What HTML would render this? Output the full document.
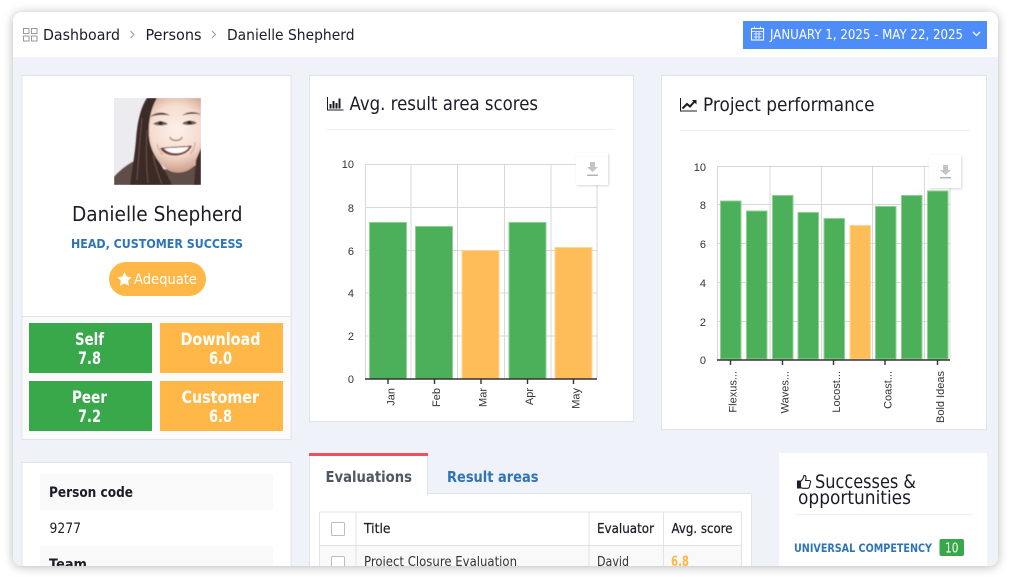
<!DOCTYPE html>
<html lang="en"><head><meta charset="utf-8"><title>Danielle Shepherd</title>
<style>
html,body{margin:0;padding:0;background:#fff;width:1010px;height:577px;overflow:hidden}
svg{display:block}
text{font-family:"DejaVu Sans","Liberation Sans",sans-serif;fill:#1c1c28}
.ax{font-family:"Liberation Sans",sans-serif;font-size:11px;fill:#333}
.b{font-weight:bold}
.w{fill:#fff}
.tile{font-weight:bold;font-size:17px;fill:#fff}
.th{font-size:13.500px;stroke:#222;stroke-width:.25}
.g{stroke:#d8d8d8;stroke-width:1;fill:none}
</style></head><body>
<svg width="1010" height="577" viewBox="0 0 1010 577" xmlns="http://www.w3.org/2000/svg">
<defs>
<clipPath id="win"><rect x="13" y="12" width="985" height="554" rx="9"/></clipPath>
<clipPath id="ph"><rect x="114" y="98" width="87" height="87"/></clipPath>
<radialGradient id="skin" gradientUnits="userSpaceOnUse" cx="176" cy="130" r="42">
<stop offset="0" stop-color="#fdf1ea"/><stop offset=".6" stop-color="#f5dccf"/><stop offset="1" stop-color="#cf9f8b"/>
</radialGradient>
<filter id="bl" x="-10%" y="-10%" width="120%" height="120%"><feGaussianBlur stdDeviation="0.6"/></filter>
<filter id="sh" x="-30%" y="-30%" width="160%" height="160%"><feDropShadow dx="1" dy="1" stdDeviation="1.200" flood-color="#000" flood-opacity=".16"/></filter>
</defs>
<rect x="13" y="12" width="985" height="554" rx="9" fill="#fff" style="filter:drop-shadow(0 1px 5px rgba(0,0,0,.28))"/>
<g clip-path="url(#win)">
<rect x="13" y="12" width="985" height="554" fill="#eff2f9"/>
<rect x="13" y="12" width="985" height="45" fill="#fff"/>

<!-- breadcrumb -->
<g fill="none" stroke="#9a9a9a" stroke-width="1">
<rect x="23.500" y="28.500" width="5.500" height="5"/><rect x="31.500" y="28.500" width="5.500" height="5"/>
<rect x="23.500" y="36" width="5.500" height="5"/><rect x="31.500" y="36" width="5.500" height="5"/>
<path d="M130.500 31l3.500 3.500-3.500 3.500M212 31l3.500 3.500-3.500 3.500"/>
</g>
<text x="43" y="40" font-size="15.500" textLength="77" lengthAdjust="spacingAndGlyphs">Dashboard</text>
<text x="145.500" y="40" font-size="15.500" textLength="56" lengthAdjust="spacingAndGlyphs">Persons</text>
<text x="227" y="40" font-size="15.500" textLength="127.500" lengthAdjust="spacingAndGlyphs">Danielle Shepherd</text>

<!-- date -->
<rect x="743" y="21" width="244" height="28" fill="#4d8cf9"/>
<g fill="none" stroke="#fff" stroke-width="1.100">
<rect x="751.500" y="28.500" width="12" height="11.500"/>
<path d="M751.500 31.500h12M754.500 26.500v2.500M760.500 26.500v2.500M753.500 34h8M753.500 37h8M756 32v7M759 32v7" stroke-width=".8"/>
<path d="M973 32l3.500 3.500 3.500-3.500" stroke-width="1.300"/>
</g>
<text class="w" x="770" y="39" font-size="13" textLength="193" lengthAdjust="spacingAndGlyphs">JANUARY 1, 2025 - MAY 22, 2025</text>

<!-- profile card -->
<rect x="22" y="75.500" width="269" height="364" fill="#fff" stroke="#e2e3ea"/>
<g clip-path="url(#ph)">
<rect x="114" y="98" width="87" height="87" fill="#ecebf0"/>
<g filter="url(#bl)">
<path d="M114 177C120 170 128 164 136 160L160 170L201 165V185H114Z" fill="#5e4d48"/>
<path d="M147 98C140 108 137 125 136 140C135 152 133 165 130 185H172C170 178 160 165 153 150L150 120L157 98Z" fill="#3b2a27"/>
<path d="M142 118C140 135 139 155 137 180M147 130C146 148 146 165 148 183M153 155C155 165 158 175 162 184" fill="none" stroke="#6a5048" stroke-width="1"/>
<path d="M157 98C151 108 148 122 149 136C150 152 160 166 170 171C177 174 186 173 193 167C197 163 200 158 201 154V98Z" fill="url(#skin)"/>
<path d="M196 160L201 148V185H194Z" fill="#3f2e2a"/>
<path d="M150 117C155 112 164 111 170 115.500C164 114.500 156 114.500 150 117ZM182 115.500C188 111 196 111.500 201 114.500C195 113.500 188 113.500 182 115.500Z" fill="#5c4036"/>
<path d="M153 124C157 120.500 164 120.500 168 124C163 126 158 126 153 124ZM182 123.500C186 120 193 120 197 123C193 125.500 186 125.500 182 123.500Z" fill="#6b5a55"/>
<circle cx="160.500" cy="123" r="2" fill="#2e2522"/><circle cx="189.500" cy="122.500" r="2" fill="#2e2522"/>
<path d="M170 137C171 141.500 181 141.500 182 137" fill="none" stroke="#b0806e" stroke-width="1.500"/>
<path d="M160 148C170 146.500 182 146.500 192 145.500C188 158 165 159 160 148Z" fill="#7a3f38"/>
<path d="M164 148.500C172 147.500 181 147.500 189 147C185 154.500 170 155.500 164 148.500Z" fill="#fff"/>
<path d="M157 144C158 149 160 152 163 155M195 142C195 147 193 151 190 154" fill="none" stroke="#d5a793" stroke-width="1.200"/>
</g>
</g>
<text x="72" y="221" font-size="20.500" textLength="170.500" lengthAdjust="spacingAndGlyphs">Danielle Shepherd</text>
<text class="b" x="71" y="248" font-size="12.500" style="fill:#2e75b6" textLength="172" lengthAdjust="spacingAndGlyphs">HEAD, CUSTOMER SUCCESS</text>
<rect x="109" y="262" width="97" height="34" rx="17" fill="#ffb848"/>
<path d="M124.500 272l2.200 4.600 5 .7-3.600 3.500.9 5-4.500-2.400-4.500 2.400.9-5-3.600-3.500 5-.7z" fill="#fff"/>
<text class="w" x="134" y="284" font-size="14.500" textLength="63" lengthAdjust="spacingAndGlyphs">Adequate</text>
<line x1="22" y1="316.500" x2="291" y2="316.500" stroke="#e2e3ea"/>
<rect x="23" y="317" width="267" height="122" fill="#fbfbfb"/>
<rect x="29" y="323" width="123" height="50" fill="#38a84a"/><rect x="160" y="323" width="123" height="50" fill="#ffb848"/>
<rect x="29" y="381" width="123" height="50" fill="#38a84a"/><rect x="160" y="381" width="123" height="50" fill="#ffb848"/>
<text class="tile" x="75" y="345" textLength="29" lengthAdjust="spacingAndGlyphs">Self</text>
<text class="tile" x="78" y="364" textLength="23" lengthAdjust="spacingAndGlyphs">7.8</text>
<text class="tile" x="72" y="403" textLength="35" lengthAdjust="spacingAndGlyphs">Peer</text>
<text class="tile" x="78" y="422" textLength="23" lengthAdjust="spacingAndGlyphs">7.2</text>
<text class="tile" x="180.500" y="345" textLength="80" lengthAdjust="spacingAndGlyphs">Download</text>
<text class="tile" x="209" y="364" textLength="23" lengthAdjust="spacingAndGlyphs">6.0</text>
<text class="tile" x="181.500" y="403" textLength="77.500" lengthAdjust="spacingAndGlyphs">Customer</text>
<text class="tile" x="209" y="422" textLength="23" lengthAdjust="spacingAndGlyphs">6.8</text>

<!-- details card -->
<rect x="22" y="462.500" width="269" height="120" fill="#fff" stroke="#e2e3ea"/>
<rect x="40" y="474" width="233" height="36" fill="#f9f9f9"/>
<rect x="40" y="546" width="233" height="30" fill="#f9f9f9"/>
<text class="b" x="49" y="497" font-size="14.500" textLength="84" lengthAdjust="spacingAndGlyphs">Person code</text>
<text x="49.500" y="533" font-size="14.500" textLength="31.500" lengthAdjust="spacingAndGlyphs">9277</text>
<text class="b" x="49" y="569" font-size="14.500" textLength="38" lengthAdjust="spacingAndGlyphs">Team</text>

<!-- chart 1 -->
<rect x="309.500" y="75.500" width="324" height="346" fill="#fff" stroke="#e2e3ea"/>
<g fill="#1c1c28"><rect x="327" y="97" width="1" height="13"/><rect x="327" y="109.500" width="16.500" height="1"/>
<rect x="329.500" y="104" width="2" height="4.500"/><rect x="332.500" y="101" width="2" height="7.500"/><rect x="335.500" y="103" width="2" height="5.500"/><rect x="338.500" y="98.500" width="2" height="10"/></g>
<text x="349.500" y="110" font-size="19" textLength="188.500" lengthAdjust="spacingAndGlyphs">Avg. result area scores</text>
<line x1="327" y1="129.500" x2="615" y2="129.500" stroke="#eeeeee"/>
<path class="g" d="M365 164.500H597M365 207.500H597M365 250.500H597M365 293H597M365 336H597M365.500 164V379M411 164V379M457.500 164V379M504.500 164V379M551 164V379M597 164V379"/>
<g fill="#4cb05a" stroke="#8fcf96"><rect x="369.500" y="222.500" width="37" height="156.500"/><rect x="415.500" y="226.500" width="37" height="152.500"/><rect x="509" y="222.500" width="37" height="156.500"/></g>
<g fill="#ffbd5a" stroke="#ffd596"><rect x="462" y="250.500" width="37" height="128.500"/><rect x="555" y="247.500" width="37" height="131.500"/></g>
<path d="M365 379H597M388 379v5M434.500 379v5M481 379v5M527.500 379v5M573.500 379v5" stroke="#333" stroke-width="1.400" fill="none"/>
<g text-anchor="end"><text class="ax" x="354" y="168">10</text><text class="ax" x="354" y="212">8</text><text class="ax" x="354" y="255">6</text><text class="ax" x="354" y="297">4</text><text class="ax" x="354" y="340">2</text><text class="ax" x="354" y="383">0</text>
<text class="ax" transform="rotate(-90 394.500 388)" x="394.500" y="388">Jan</text>
<text class="ax" transform="rotate(-90 440 388)" x="440" y="388">Feb</text>
<text class="ax" transform="rotate(-90 486.500 388)" x="486.500" y="388">Mar</text>
<text class="ax" transform="rotate(-90 533 388)" x="533" y="388">Apr</text>
<text class="ax" transform="rotate(-90 579.500 388)" x="579.500" y="388">May</text></g>
<rect x="576" y="153" width="32" height="32" rx="1" fill="#fff" filter="url(#sh)"/>
<path d="M590 162h5v5h3l-5.500 5-5.500-5h3z" fill="#c4c4c4"/><rect x="587" y="174.500" width="11" height="1.500" fill="#b4b4b4"/>

<!-- chart 2 -->
<rect x="661.500" y="75.500" width="325" height="354" fill="#fff" stroke="#e2e3ea"/>
<path d="M680.500 98v13H697" fill="none" stroke="#1c1c28" stroke-width="1"/>
<path d="M682.500 108.500l4.500-4.500 3 2.500 5-5.500" fill="none" stroke="#1c1c28" stroke-width="2"/><path d="M692 100h4.500v4.500z" fill="#1c1c28"/>
<text x="703" y="111" font-size="19" textLength="171.500" lengthAdjust="spacingAndGlyphs">Project performance</text>
<line x1="680" y1="130.500" x2="970" y2="130.500" stroke="#eeeeee"/>
<path class="g" d="M717 166.500H950M717 204.500H950M717 243.500H950M717 282.500H950M717 321.500H950M717.500 166V360M770 166V360M821.500 166V360M872.500 166V360M924.500 166V360M950 166V360"/>
<g fill="#4cb05a" stroke="#8fcf96"><rect x="720.500" y="201" width="20.500" height="158"/><rect x="746.500" y="211" width="20.500" height="148"/><rect x="772.500" y="195.500" width="20.500" height="163.500"/><rect x="798" y="212.500" width="20.500" height="146.500"/><rect x="824" y="218.500" width="20.500" height="140.500"/><rect x="875.500" y="206.500" width="20.500" height="152.500"/><rect x="901.500" y="195.500" width="20.500" height="163.500"/><rect x="927.500" y="191" width="20.500" height="168"/></g>
<rect x="850" y="225.500" width="20.500" height="133.500" fill="#ffbd5a" stroke="#ffd596"/>
<path d="M717 360H950M730.500 360v5M782.500 360v5M833.500 360v5M885 360v5M937.500 360v5" stroke="#333" stroke-width="1.400" fill="none"/>
<g text-anchor="end"><text class="ax" x="706" y="171">10</text><text class="ax" x="706" y="209">8</text><text class="ax" x="706" y="248">6</text><text class="ax" x="706" y="287">4</text><text class="ax" x="706" y="326">2</text><text class="ax" x="706" y="364">0</text>
<text class="ax" transform="rotate(-90 736.500 371)" x="736.500" y="371">Flexus...</text>
<text class="ax" transform="rotate(-90 788.500 371)" x="788.500" y="371">Waves...</text>
<text class="ax" transform="rotate(-90 840 371)" x="840" y="371">Locost...</text>
<text class="ax" transform="rotate(-90 891.500 371)" x="891.500" y="371">Coast...</text>
<text class="ax" transform="rotate(-90 944 371)" x="944" y="371">Bold Ideas</text></g>
<rect x="929" y="155" width="32" height="33" rx="1" fill="#fff" filter="url(#sh)"/>
<path d="M943 165h5v5h3l-5.500 5-5.500-5h3z" fill="#c4c4c4"/><rect x="940" y="177" width="11" height="1.500" fill="#b4b4b4"/>

<!-- tabs -->
<rect x="309.500" y="493.500" width="442" height="90" fill="#fff" stroke="#e2e3ea"/>
<rect x="309.500" y="454" width="118" height="41" fill="#fff" stroke="#e2e3ea"/>
<rect x="310" y="494" width="117" height="2" fill="#fff"/>
<rect x="309" y="453" width="119" height="3" fill="#f0505a"/>
<text class="b" x="325.500" y="482" font-size="15" style="fill:#4e5864" textLength="86.500" lengthAdjust="spacingAndGlyphs">Evaluations</text>
<text class="b" x="447" y="482" font-size="15" style="fill:#2e75b6" textLength="91.500" lengthAdjust="spacingAndGlyphs">Result areas</text>

<!-- table -->
<rect x="320" y="546" width="421" height="30" fill="#f9f9f9"/>
<path d="M319.500 512H741.500V580M319.500 512V580M356 512V580M589 512V580M663.500 512V580M319.500 545.500H741.500" fill="none" stroke="#e3e3e3"/>
<rect x="331.500" y="522.500" width="13" height="13" rx="1" fill="#fff" stroke="#bdbdbd"/>
<rect x="331.500" y="556.500" width="13" height="13" rx="1" fill="#fff" stroke="#bdbdbd"/>
<text class="th" x="364" y="533" textLength="26.500" lengthAdjust="spacingAndGlyphs">Title</text>
<text class="th" x="597" y="533" textLength="57" lengthAdjust="spacingAndGlyphs">Evaluator</text>
<text class="th" x="671.500" y="533" textLength="61" lengthAdjust="spacingAndGlyphs">Avg. score</text>
<text x="364" y="566" font-size="13.500" textLength="153" lengthAdjust="spacingAndGlyphs" style="fill:#333">Project Closure Evaluation</text>
<text x="597" y="566" font-size="13.500" textLength="32" lengthAdjust="spacingAndGlyphs" style="fill:#333">David</text>
<text class="b" x="671" y="566" font-size="14" textLength="18" lengthAdjust="spacingAndGlyphs" style="fill:#ffb848">6.8</text>

<!-- successes -->
<rect x="779" y="453" width="208" height="130" fill="#fff"/>
<path d="M797.500 481h3v7h-3zM800.500 481.500c2-1.500 3-3.500 3.500-6 2-.3 2.500 2 1.500 5h3.800c1.500 0 1.500 1.500 1 2.500l-1 4c-.3 1-1 1.300-2 1.300h-4.500l-2.300-.8z" fill="none" stroke="#1c1c28" stroke-width="1.100"/>
<rect x="797.500" y="481" width="3" height="7" fill="#1c1c28"/>
<text x="815" y="488" font-size="19" textLength="101" lengthAdjust="spacingAndGlyphs">Successes &amp;</text>
<text x="798" y="504" font-size="19" textLength="113" lengthAdjust="spacingAndGlyphs">opportunities</text>
<line x1="796" y1="514.500" x2="972" y2="514.500" stroke="#eeeeee"/>
<text class="b" x="794" y="552" font-size="11.500" style="fill:#2e75b6" textLength="138" lengthAdjust="spacingAndGlyphs">UNIVERSAL COMPETENCY</text>
<rect x="939.500" y="539" width="24.500" height="17" rx="2" fill="#38a84a"/>
<text class="w" x="945" y="552.500" font-size="13" textLength="13.500" lengthAdjust="spacingAndGlyphs">10</text>
</g>
</svg>
</body></html>
